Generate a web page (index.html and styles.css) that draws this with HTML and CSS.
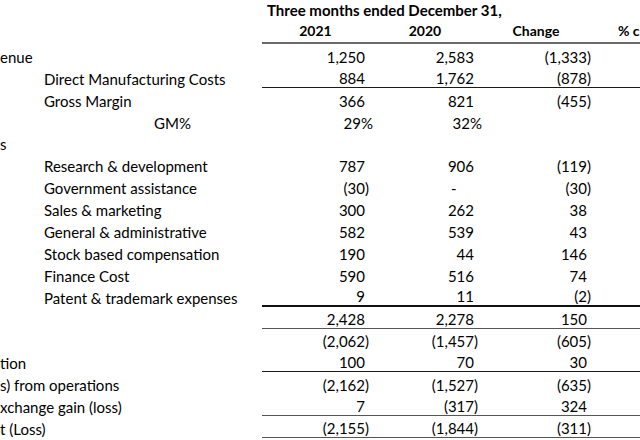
FILE: index.html
```html
<!DOCTYPE html>
<html>
<head>
<meta charset="utf-8">
<link rel="stylesheet" href="styles.css">
</head>
<body>
<div class="sheet">
  <div class="row title-row"><div class="label"></div><div class="title">Three months ended December 31,</div></div>
  <div class="row head-row rule-head">
    <div class="label"></div>
    <div class="c hc">2021</div><div class="c hc">2020</div><div class="c hc">Change</div><div class="c hc pc">% change</div>
  </div>

  <div class="row"><div class="label l0">enue</div><div class="c"><span class="n">1,250</span></div><div class="c"><span class="n">2,583</span></div><div class="c"><span>(1,333)</span></div><div class="c"></div></div>
  <div class="row rule-dark"><div class="label l1">Direct Manufacturing Costs</div><div class="c"><span class="n">884</span></div><div class="c"><span class="n">1,762</span></div><div class="c"><span>(878)</span></div><div class="c"></div></div>
  <div class="row"><div class="label l1">Gross Margin</div><div class="c"><span class="n">366</span></div><div class="c"><span class="n">821</span></div><div class="c"><span>(455)</span></div><div class="c"></div></div>
  <div class="row"><div class="label l2">GM%</div><div class="c"><span class="pct">29%</span></div><div class="c"><span class="pct">32%</span></div><div class="c"></div><div class="c"></div></div>
  <div class="row"><div class="label l0">s</div><div class="c"></div><div class="c"></div><div class="c"></div><div class="c"></div></div>
  <div class="row"><div class="label l1">Research &amp; development</div><div class="c"><span class="n">787</span></div><div class="c"><span class="n">906</span></div><div class="c"><span>(119)</span></div><div class="c"></div></div>
  <div class="row"><div class="label l1">Government assistance</div><div class="c"><span>(30)</span></div><div class="c"><span class="dash">-</span></div><div class="c"><span>(30)</span></div><div class="c"></div></div>
  <div class="row"><div class="label l1">Sales &amp; marketing</div><div class="c"><span class="n">300</span></div><div class="c"><span class="n">262</span></div><div class="c"><span class="n">38</span></div><div class="c"></div></div>
  <div class="row"><div class="label l1">General &amp; administrative</div><div class="c"><span class="n">582</span></div><div class="c"><span class="n">539</span></div><div class="c"><span class="n">43</span></div><div class="c"></div></div>
  <div class="row"><div class="label l1">Stock based compensation</div><div class="c"><span class="n">190</span></div><div class="c"><span class="n">44</span></div><div class="c"><span class="n">146</span></div><div class="c"></div></div>
  <div class="row"><div class="label l1">Finance Cost</div><div class="c"><span class="n">590</span></div><div class="c"><span class="n">516</span></div><div class="c"><span class="n">74</span></div><div class="c"></div></div>
  <div class="row rule-thick"><div class="label l1">Patent &amp; trademark expenses</div><div class="c"><span class="n">9</span></div><div class="c"><span class="n">11</span></div><div class="c"><span>(2)</span></div><div class="c"></div></div>
  <div class="row rule-gray"><div class="label"></div><div class="c"><span class="n">2,428</span></div><div class="c"><span class="n">2,278</span></div><div class="c"><span class="n">150</span></div><div class="c"></div></div>
  <div class="row"><div class="label"></div><div class="c"><span>(2,062)</span></div><div class="c"><span>(1,457)</span></div><div class="c"><span>(605)</span></div><div class="c"></div></div>
  <div class="row rule-dark"><div class="label l0">tion</div><div class="c"><span class="n">100</span></div><div class="c"><span class="n">70</span></div><div class="c"><span class="n">30</span></div><div class="c"></div></div>
  <div class="row"><div class="label l0">s) from operations</div><div class="c"><span>(2,162)</span></div><div class="c"><span>(1,527)</span></div><div class="c"><span>(635)</span></div><div class="c"></div></div>
  <div class="row rule-gray"><div class="label l0">xchange gain (loss)</div><div class="c"><span class="n">7</span></div><div class="c"><span>(317)</span></div><div class="c"><span class="n">324</span></div><div class="c"></div></div>
  <div class="row rule-gray"><div class="label l0">t (Loss)</div><div class="c"><span>(2,155)</span></div><div class="c"><span>(1,844)</span></div><div class="c"><span>(311)</span></div><div class="c"></div></div>
</div>
</body>
</html>
```

FILE: styles.css
```css
html, body {
  margin: 0;
  padding: 0;
  background: #ffffff;
}

body {
  width: 640px;
  height: 440px;
  overflow: hidden;
  font-family: Lato, "Open Sans", "Liberation Sans", sans-serif;
  font-size: 15px;
  color: #000;
}

.sheet {
  display: flex;
  flex-direction: column;
}

.row {
  display: grid;
  grid-template-columns: 262px 110px 109px 113px 110px;
  height: 21.9px;
  line-height: 17px;
  box-sizing: border-box;
}

.row > div {
  display: flex;
  align-items: flex-end;
  white-space: nowrap;
  box-sizing: border-box;
  overflow: visible;
}

.title-row {
  height: 22px;
  padding-bottom: 3px;
}

.title {
  grid-column: 2 / 6;
  font-weight: bold;
  font-size: 15px;
  padding-left: 5px;
}

.head-row {
  height: 22px;
}

.c {
  justify-content: flex-end;
  padding-right: 3px;
}

.c.hc {
  justify-content: center;
  font-weight: bold;
  font-size: 14px;
  padding-bottom: 3px;
}

.c.hc.pc {
  justify-content: flex-start;
  padding-left: 24px;
}

.n::after,
.pct::after {
  content: ")";
  visibility: hidden;
}

.pct {
  margin-right: -8px;
}

.dash::after {
  content: "00)";
  visibility: hidden;
}

.label {
  justify-content: flex-start;
}

.l0 { padding-left: 0; }
.l1 { padding-left: 44px; }
.l2 { padding-left: 154px; }

.rule-head > .c { border-bottom: 2px solid #6b6b6b; }
.rule-dark > .c { border-bottom: 1.5px solid #1a1a1a; }
.rule-thick > .c { border-bottom: 2px solid #111; }
.rule-gray > .c { border-bottom: 1.5px solid #555; }
```
